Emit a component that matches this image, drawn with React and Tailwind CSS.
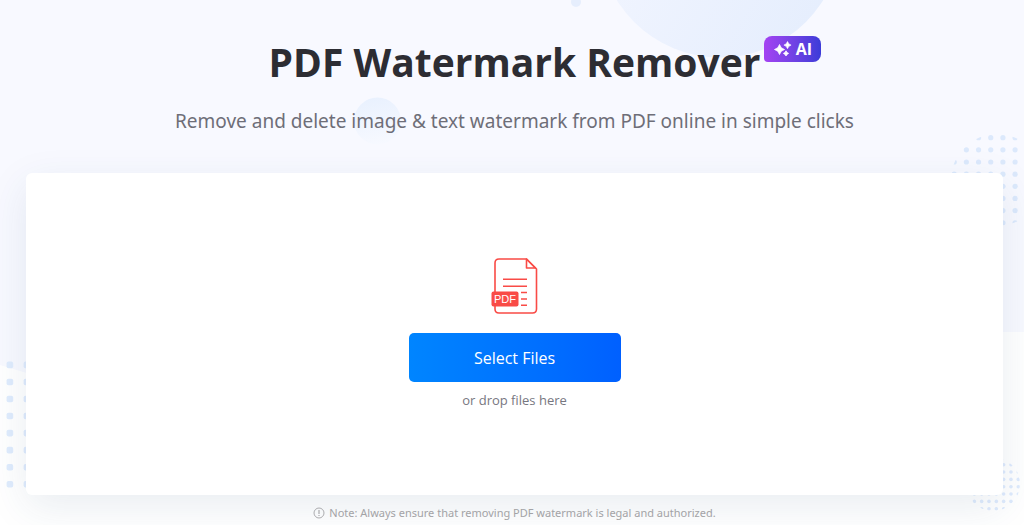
import React from 'react';

const range = (n) => Array.from({ length: n }, (_, i) => i);

function Backdrop() {
  return (
    <div className="pointer-events-none absolute inset-0 -z-10 overflow-hidden" aria-hidden="true">
      <svg className="absolute left-0 top-0 h-[525px] w-full" preserveAspectRatio="none" viewBox="0 0 1024 525">
        <path d="M0 0H1024V332H330Q190 420 30 374L0 365Z" fill="#f8f9ff" />
      </svg>
      <svg className="absolute left-1/2 top-0 -ml-[512px]" width="1024" height="525" viewBox="0 0 1024 525">
        <defs>
          <linearGradient id="bubble" x1="0" y1="0.3" x2="1" y2="0.9">
            <stop offset="0" stopColor="#f3f6ff" />
            <stop offset="1" stopColor="#e4edfd" />
          </linearGradient>
          <linearGradient id="bubbleSmall" x1="0.4" y1="0" x2="0.6" y2="1">
            <stop offset="0" stopColor="#e9f1fe" />
            <stop offset="1" stopColor="#f7f9ff" />
          </linearGradient>
        </defs>
        <circle cx="720" cy="-64" r="121.5" fill="url(#bubble)" />
        <circle cx="576" cy="2" r="5" fill="#e6eefd" />
        <circle cx="377.500" cy="121" r="23.500" fill="url(#bubbleSmall)" />
      </svg>
      <svg className="absolute left-0 top-[358px]" width="40" height="140" viewBox="0 358 40 140" fill="#e0ecfd">
        {range(8).map((r) =>
          range(2).map((c) => (
            <rect key={`${r}-${c}`} x={6.6 + c * 17.05} y={361.6 + r * 17.05} width="6.600" height="6.600" rx="1.800" />
          ))
        )}
      </svg>
      <svg className="absolute right-0 top-[130px]" width="76" height="100" viewBox="948 130 76 100" fill="#dce9fc">
        <clipPath id="dotsTop"><circle cx="997" cy="180" r="46" /></clipPath>
        <g clipPath="url(#dotsTop)">
          {range(8).map((r) =>
            range(6).map((c) => (
              <circle key={`${r}-${c}`} cx={954.2 + c * 12.18} cy={137.7 + r * 12.15} r="2.600" />
            ))
          )}
        </g>
      </svg>
      <svg className="absolute right-0 top-[450px]" width="60" height="66" viewBox="964 450 60 66" fill="#dfebfd">
        <clipPath id="dotsBottom"><circle cx="993" cy="484" r="27" /></clipPath>
        <g clipPath="url(#dotsBottom)">
          {range(8).map((r) =>
            range(8).map((c) => (
              <circle key={`${r}-${c}`} cx={967 + c * 7.33} cy={457.4 + r * 7.33} r="1.800" />
            ))
          )}
        </g>
      </svg>
    </div>
  );
}

function Sparkles() {
  return (
    <svg width="18" height="16" viewBox="0 0 18 16" fill="#fff" aria-hidden="true">
      <path d="M5.500 3.500Q6.500 7.500 10.500 8.500Q6.500 9.500 5.500 13.500Q4.500 9.500 .5 8.500Q4.500 7.500 5.500 3.500Z" stroke="#fff" strokeWidth=".8" />
      <path d="M13.500 0.500Q14.300 3.300 17.100 4.100Q14.300 4.900 13.500 7.700Q12.700 4.900 9.900 4.100Q12.700 3.300 13.500 .5Z" stroke="#fff" strokeWidth=".6" />
      <path d="M12 9.800Q12.600 11.800 14.600 12.400Q12.600 13 12 15Q11.400 13 9.400 12.400Q11.400 11.800 12 9.800Z" stroke="#fff" strokeWidth=".8" />
    </svg>
  );
}

function PdfIcon() {
  return (
    <svg width="48" height="56" viewBox="0 0 48 56" fill="none" aria-hidden="true">
      <path d="M35.500 1H8Q4 1 4 5V51Q4 55 8 55H41.500Q45.500 55 45.500 51V11Z" stroke="#f94b46" strokeWidth="1.600" strokeLinejoin="round" />
      <path d="M35.500 1V10H44.500Z" stroke="#f94b46" strokeWidth="1.600" strokeLinejoin="round" />
      <path d="M12 21.200H36M12 28.200H36M30 34.500H36M30 41H36M30 47.300H36" stroke="#f94b46" strokeWidth="1.600" />
      <rect x="0.500" y="33.500" width="27" height="15" rx="2" fill="#f94b46" />
      <text x="14" y="45" textAnchor="middle" fill="#fff" className="font-['Liberation_Sans',sans-serif] text-[11px]">PDF</text>
    </svg>
  );
}

function InfoIcon() {
  return (
    <svg width="12" height="12" viewBox="0 0 12 12" fill="none" stroke="#a3a3a6" aria-hidden="true">
      <circle cx="6" cy="6" r="5" strokeWidth=".9" />
      <path d="M6 3V7M6 8V9" strokeWidth="1.100" />
    </svg>
  );
}

export default function App() {
  return (
    <main className="relative isolate min-h-screen overflow-hidden bg-white pb-1 pl-[26px] pr-[21px] pt-9 font-['Open_Sans',sans-serif]">
      <Backdrop />
      <header className="text-center">
        <h1 className="relative mx-auto w-fit text-[39px] font-bold leading-[52px] text-[#2d2d33]">
          PDF Watermark Remover
          <span className="absolute left-full top-0 ml-1 flex h-[26px] w-[57px] items-center justify-center gap-1 rounded-lg rounded-bl-sm bg-linear-to-r from-[#a442f2] to-[#3c3bd8] text-base leading-6 text-white">
            <Sparkles />
            AI
          </span>
        </h1>
        <p className="mt-[18px] font-['Noto_Sans',sans-serif] text-[19px] leading-[30px] text-[#6e6e78]">
          Remove and delete image &amp; text watermark from PDF online in simple clicks
        </p>
      </header>
      <section className="mt-[37px] flex h-[322px] flex-col items-center rounded-md bg-white pt-[85px] shadow-[0_12px_40px_rgba(40,75,120,0.10)]">
        <PdfIcon />
        <button type="button" className="mt-[19px] h-[49px] w-[212px] rounded-[5px] bg-linear-to-r from-[#0085ff] to-[#0060ff] text-base text-white">
          Select Files
        </button>
        <p className="mt-2 text-[13px] leading-5 text-[#77777f]">or drop files here</p>
      </section>
      <p className="mt-2 flex items-center justify-center gap-1 font-['Noto_Sans',sans-serif] text-[11px] leading-5 text-[#a3a3a6]">
        <InfoIcon />
        Note: Always ensure that removing PDF watermark is legal and authorized.
      </p>
    </main>
  );
}
